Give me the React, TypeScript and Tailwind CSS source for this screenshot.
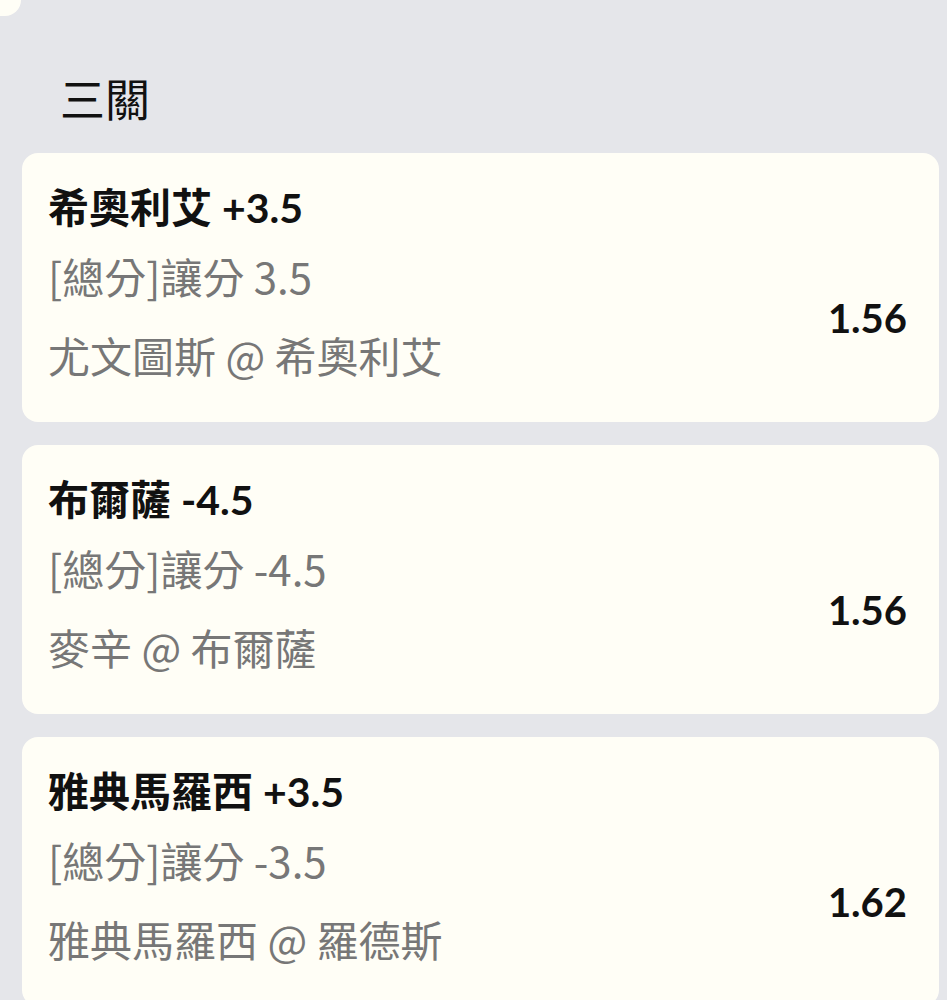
const bets = [
  { pick: "希奧利艾", line: "+3.5", market: "[總分]讓分 3.5", match: "尤文圖斯 @ 希奧利艾", odds: "1.56" },
  { pick: "布爾薩", line: "-4.5", market: "[總分]讓分 -4.5", match: "麥辛 @ 布爾薩", odds: "1.56" },
  { pick: "雅典馬羅西", line: "+3.5", market: "[總分]讓分 -3.5", match: "雅典馬羅西 @ 羅德斯", odds: "1.62" },
]

const cjk = "font-['Lato','Noto_Sans_CJK_TC',sans-serif]"

export default function App() {
  return (
    <div className={`min-h-[1000px] bg-[#e5e6ea] ${cjk}`}>
      {/* tail of the previous panel */}
      <div className="h-[16px] w-[21px] rounded-br-[18px] bg-[#fffef6]" />

      <h2 className="pl-[60px] pt-[58px] text-[45px] leading-[48px] text-[#111] font-['Noto_Sans_CJK_TC',sans-serif]">三關</h2>

      <div className="mt-[31px] flex flex-col gap-[23px] pl-[22px] pr-[8px]">
        {bets.map((b, i) => (
          <div key={i} className="h-[269px] rounded-[16px] bg-[#fffef6] pl-[26px] pr-[32px] pt-[24px]">
            <div className="h-[56px] text-[41px] font-bold leading-[56px] text-[#111]">
              <span className="font-['Noto_Sans_CJK_TC',sans-serif]">{b.pick}</span>{" "}
              <span>{b.line}</span>
            </div>
            <div className="mt-[3px] flex items-center justify-between">
              <div className="text-[42px] leading-[79px] text-[#777] font-['Noto_Sans_CJK_TC',sans-serif]">
                <div className="h-[79px]">{b.market}</div>
                <div className="h-[79px]">{b.match}</div>
              </div>
              <div className="pt-[6px] text-[40px] font-bold text-[#111] font-['Lato',sans-serif]">{b.odds}</div>
            </div>
          </div>
        ))}
      </div>
    </div>
  )
}
